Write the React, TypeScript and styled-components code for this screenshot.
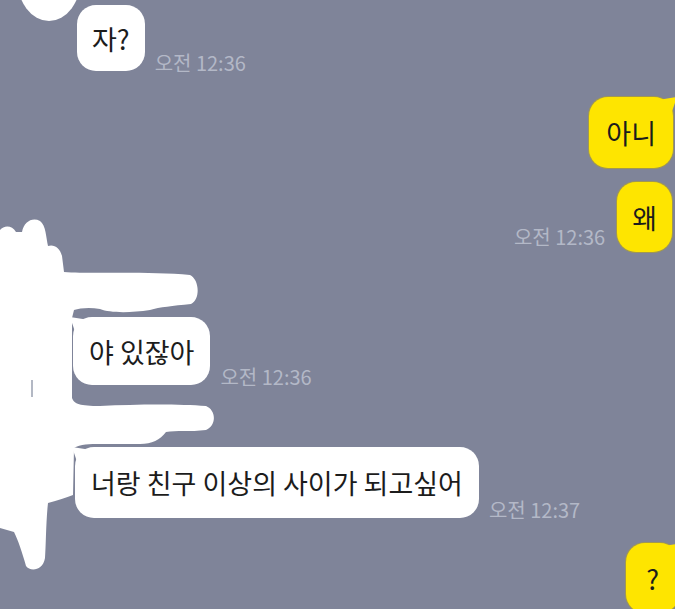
import React from "react";
import styled, { createGlobalStyle, css } from "styled-components";

const Global = createGlobalStyle`
  html, body { margin: 0; padding: 0; background: #7f8499; }
  * { box-sizing: border-box; }
`;

const Screen = styled.div`
  position: relative;
  width: 675px;
  height: 609px;
  overflow: hidden;
  background: #7f8499;
  font-family: "Noto Sans CJK KR", "Noto Sans", sans-serif;
`;

const Scribble = styled.svg`
  position: absolute;
  left: 0;
  top: 0;
  z-index: 0;
  pointer-events: none;
`;

const Thread = styled.div`
  position: relative;
  z-index: 1;
  display: flex;
  flex-direction: column;
`;

type Side = "left" | "right";

const Row = styled.div<{ $side: Side; $top: number; $inset: number }>`
  display: flex;
  align-items: flex-end;
  gap: ${(p) => (p.$side === "left" ? 10 : 12)}px;
  margin-top: ${(p) => p.$top}px;
  ${(p) =>
    p.$side === "left"
      ? css`
          justify-content: flex-start;
          padding-left: ${p.$inset}px;
        `
      : css`
          justify-content: flex-end;
          margin-right: ${-p.$inset}px;
        `}
`;

const Bubble = styled.div<{ $side: Side; $h: number; $pad: number; $tail?: boolean }>`
  position: relative;
  flex: none;
  display: flex;
  align-items: center;
  height: ${(p) => p.$h}px;
  padding: 0 ${(p) => p.$pad}px;
  border-radius: 19px;
  font-size: 27px;
  line-height: 1;
  font-weight: 400;
  color: #1c1c1c;
  white-space: nowrap;
  background: ${(p) => (p.$side === "left" ? "#ffffff" : "#fee500")};
  box-shadow: ${(p) =>
    p.$side === "left" ? "none" : "0 0 0 1px rgba(190, 170, 20, 0.55)"};
  ${(p) =>
    p.$tail &&
    (p.$side === "left"
      ? css`
          &::before {
            content: "";
            position: absolute;
            left: -3px;
            top: 0;
            width: 16px;
            height: 14px;
            background: #ffffff;
            clip-path: polygon(0 0, 100% 18%, 100% 100%, 30% 100%);
          }
        `
      : css`
          &::before {
            content: "";
            position: absolute;
            right: -4px;
            top: 0;
            width: 16px;
            height: 14px;
            background: #fee500;
            clip-path: polygon(100% 0, 0 18%, 0 100%, 70% 100%);
          }
        `)}
`;

const Time = styled.span<{ $lift: number }>`
  flex: none;
  font-size: 20px;
  line-height: 20px;
  color: #b3b8c7;
  white-space: nowrap;
  margin-bottom: ${(p) => p.$lift}px;
`;

type Msg = {
  side: Side;
  text: string;
  top: number;
  inset: number;
  h: number;
  pad: number;
  tail?: boolean;
  time?: string;
  lift?: number;
};

const messages: Msg[] = [
  { side: "left", text: "자?", top: 5, inset: 77, h: 66, pad: 15, time: "오전 12:36", lift: -2 },
  { side: "right", text: "아니", top: 26, inset: -2, h: 71, pad: 17, tail: true },
  { side: "right", text: "왜", top: 14, inset: -3, h: 70, pad: 15, time: "오전 12:36", lift: 5 },
  { side: "left", text: "야 있잖아", top: 65, inset: 73, h: 68, pad: 16, tail: true, time: "오전 12:36", lift: -2 },
  { side: "left", text: "너랑 친구 이상의 사이가 되고싶어", top: 62, inset: 75, h: 71, pad: 16, tail: true, time: "오전 12:37", lift: -2 },
  { side: "right", text: "?", top: 25, inset: 4, h: 70, pad: 20, tail: true },
];

export default function App() {
  return (
    <Screen>
      <Global />
      <Scribble width="675" height="609" viewBox="0 0 675 609">
        <ellipse cx="49" cy="-22" rx="32" ry="43" fill="#ffffff" />
        <path
          fill="#ffffff"
          d="M0,230 C4,225 12,225 16,232 L22,232 C24,222 32,217 40,221 C46,225 46,238 48,246
             C54,244 60,248 62,256 L64,272 C90,274 150,271 190,275 C199,279 201,299 191,304
             C172,306 160,307 150,310 C130,313 110,313 100,309 C90,307 80,308 74,310 L72,318 L72,398
             C74,404 80,406 100,406 C140,404 180,404 206,406 C216,410 217,425 206,430
             C190,432 176,430 166,432 C160,440 152,444 140,444 L100,444 C90,444 80,444 74,448
             L73,495 C66,498 58,500 48,503 C46,520 46,545 45,558 C43,571 30,572 26,566
             C22,552 18,540 14,532 L0,528 Z"
        />
        <path d="M32,380 L32,397" stroke="#9aa0b0" strokeWidth="1.5" />
      </Scribble>
      <Thread>
        {messages.map((m, i) => (
          <Row key={i} $side={m.side} $top={m.top} $inset={m.inset}>
            {m.side === "right" && m.time && <Time $lift={m.lift ?? 0}>{m.time}</Time>}
            <Bubble $side={m.side} $h={m.h} $pad={m.pad} $tail={m.tail}>
              {m.text}
            </Bubble>
            {m.side === "left" && m.time && <Time $lift={m.lift ?? 0}>{m.time}</Time>}
          </Row>
        ))}
      </Thread>
    </Screen>
  );
}
